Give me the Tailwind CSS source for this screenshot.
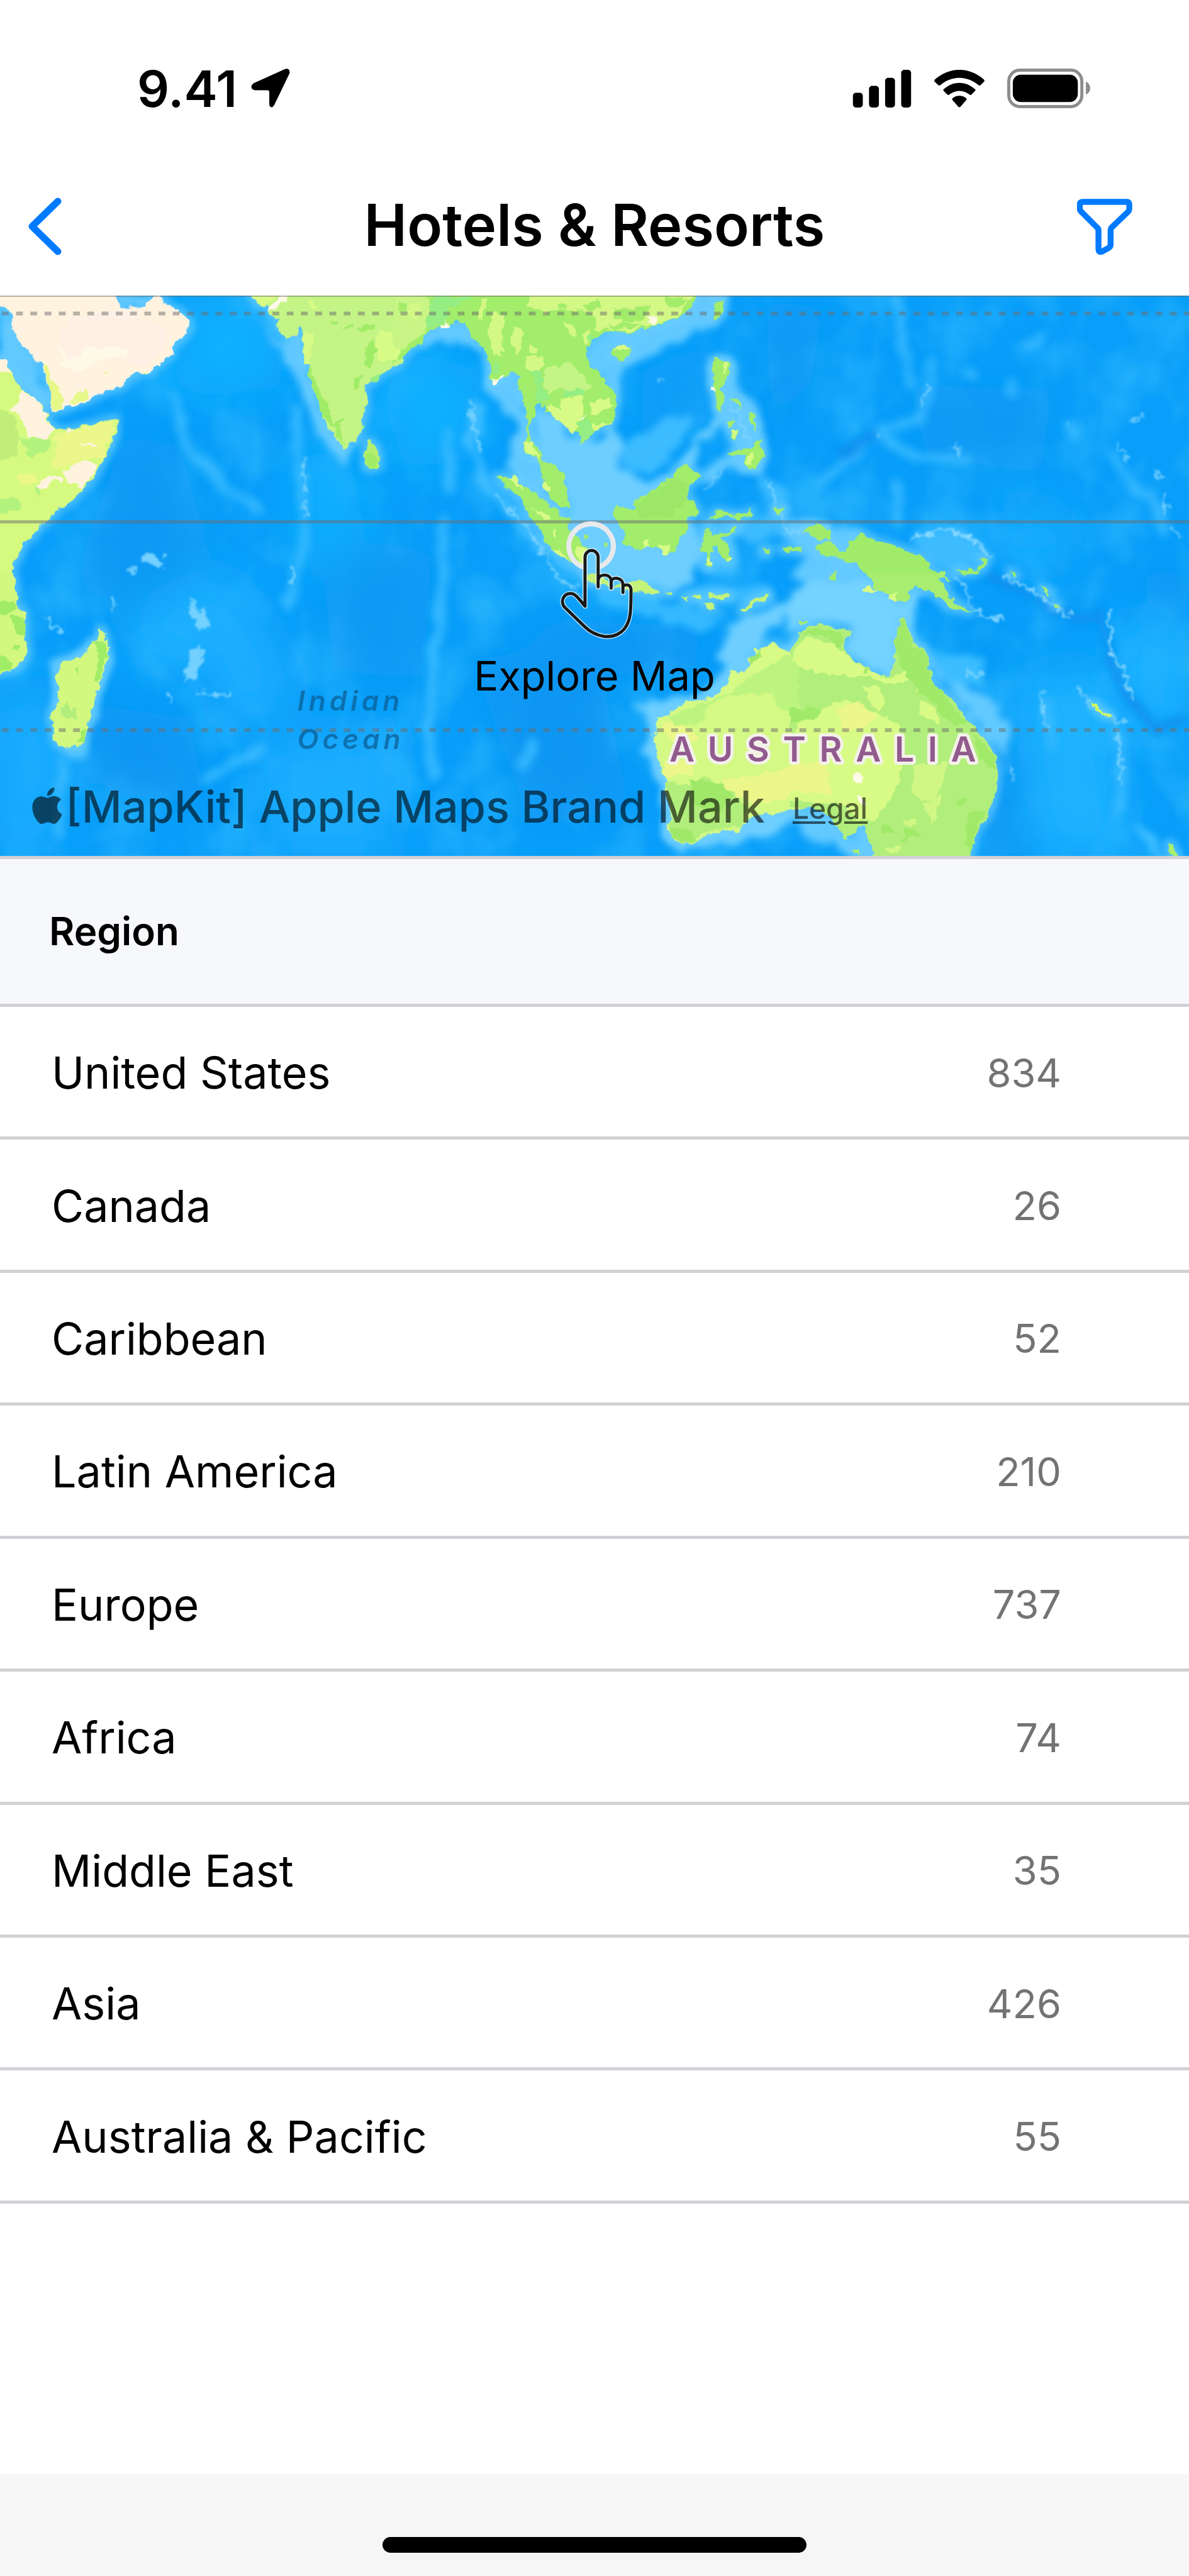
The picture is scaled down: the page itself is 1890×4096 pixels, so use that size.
<!DOCTYPE html>
<html lang="en">
<head>
  <meta charset="UTF-8" />
  <meta name="viewport" content="width=device-width, initial-scale=1" />
  <title>Hotels &amp; Resorts</title>
  <script src="https://cdn.jsdelivr.net/npm/@tailwindcss/browser@4"></script>
</head>
<body class="min-h-screen flex flex-col bg-white text-black font-[Inter,'Liberation_Sans',sans-serif]">

  <!-- Status bar -->
  <div class="flex items-center justify-between h-[250px] pt-[31px] pl-[218px] pr-[157px]">
    <div class="flex items-center gap-[22px]">
      <span class="text-[80px] leading-none font-semibold">9.41</span>
      <svg class="w-[63px] h-[63px]" viewBox="0 0 63 64" aria-hidden="true">
        <path d="M62 7 L37 59 Q34 64 31 62 Q29 61 29 57 L29 38 Q29 35 26 35 L6 35 Q0 34 0 29 Q1 25 5 23 L54 1 Q62 -2 62 7Z" />
      </svg>
    </div>
    <div class="flex items-center">
      <svg class="w-[94px] h-[60px] mr-[35px]" viewBox="0 0 94 61" aria-hidden="true">
        <rect x="0" y="37" width="16" height="24" rx="5" />
        <rect x="26" y="26" width="16" height="35" rx="5" />
        <rect x="52" y="13" width="16" height="48" rx="5" />
        <rect x="78" y="0" width="16" height="61" rx="5" />
      </svg>
      <svg class="w-[82px] h-[60px] mr-[35px]" viewBox="0 0 82 61" aria-hidden="true">
        <path d="M41 13 C53 13 64 18 72 25 Q73.500 26 75 25 L81 19 Q82 17.500 81 16 C70 6 56 0 41 0 C26 0 12 6 1 16 Q0 17.500 1 19 L7 25 Q8.500 26 10 25 C18 18 29 13 41 13Z" />
        <path d="M41 34 C47 34 53 36.500 58 40.500 Q59 41.500 60 40.500 L66.500 34 Q67.500 32.500 66.500 31.500 C59 25 51 21 41 21 C31 21 23 25 15.500 31.500 Q14.500 32.500 15.500 34 L22 40.500 Q23 41.500 24 40.500 C29 36.500 35 34 41 34Z" />
        <path d="M41 42 C45.500 42 49 43.500 52 46 Q53.500 47.500 52 49 L42.500 60 Q41 61 39.500 60 L30 49 Q28.500 47.500 30 46 C33 43.500 36.500 42 41 42Z" />
      </svg>
      <svg class="w-[132px] h-[63px]" viewBox="0 0 134 64" aria-hidden="true">
        <rect x="2.500" y="2.500" width="118" height="59" rx="18" fill="none" stroke="#8c8c8c" stroke-width="5" />
        <rect x="9" y="10" width="105" height="44" rx="13" />
        <path d="M127 21 Q134 24 134 32 Q134 39 127 42Z" fill="#8c8c8c" />
      </svg>
    </div>
  </div>

  <!-- Navigation bar -->
  <header class="grid grid-cols-[1fr_auto_1fr] items-center h-[220px] pl-11 pr-[90px]">
    <button type="button" aria-label="Back" class="justify-self-start">
      <svg class="w-[54px] h-[92px]" viewBox="0 0 54 92" fill="none" stroke="#007aff" stroke-width="11" stroke-linecap="round" stroke-linejoin="round">
        <path d="M48 6 L7 46 L48 86" />
      </svg>
    </button>
    <h1 class="pl-[46px] pb-1 text-[92px] leading-none font-semibold">Hotels &amp; Resorts</h1>
    <button type="button" aria-label="Filter" class="justify-self-end">
      <svg class="w-[88px] h-[89px]" viewBox="0 0 89 90" fill="none" stroke="#007aff" stroke-width="9.500" stroke-linejoin="round">
        <path d="M9 5 H80 Q84 5 84 9 V16 Q84 19 82 21 L56 46 Q54 48 54 51 V74 Q54 77 51 79 L40 85 Q34.500 87 34.500 81 V51 Q34.500 48 32 46 L7 21 Q4.500 19 4.500 16 V9 Q4.500 5 9 5Z" />
      </svg>
    </button>
  </header>

  <!-- Map -->
  <section class="relative">
    <svg class="block w-full h-auto" viewBox="0 477 1920 905" role="img" aria-label="Map of the Indian Ocean and Australia">
      <defs>
        <filter id="soft" filterUnits="userSpaceOnUse" x="-60" y="420" width="2040" height="1020"><feGaussianBlur stdDeviation="36" /></filter>
        <filter id="haze" filterUnits="userSpaceOnUse" x="-20" y="460" width="1960" height="940">
          <feTurbulence type="fractalNoise" baseFrequency="0.03" numOctaves="3" seed="4" result="n" />
          <feDisplacementMap in="SourceGraphic" in2="n" scale="30" xChannelSelector="R" yChannelSelector="G" />
          <feGaussianBlur stdDeviation="6" />
        </filter>
        <filter id="ridge" filterUnits="userSpaceOnUse" x="-20" y="460" width="1960" height="940">
          <feTurbulence type="fractalNoise" baseFrequency="0.03" numOctaves="3" seed="4" result="n" />
          <feDisplacementMap in="SourceGraphic" in2="n" scale="22" xChannelSelector="R" yChannelSelector="G" />
          <feGaussianBlur stdDeviation="7" />
        </filter>
        <filter id="spark" filterUnits="userSpaceOnUse" x="-20" y="460" width="1960" height="940">
          <feTurbulence type="fractalNoise" baseFrequency="0.08" numOctaves="3" seed="8" result="n" />
          <feDisplacementMap in="SourceGraphic" in2="n" scale="24" xChannelSelector="R" yChannelSelector="G" />
          <feGaussianBlur stdDeviation="1.500" />
        </filter>
        <filter id="coast" filterUnits="userSpaceOnUse" x="-20" y="460" width="1960" height="940">
          <feTurbulence type="fractalNoise" baseFrequency="0.07" numOctaves="3" seed="2" result="n" />
          <feDisplacementMap in="SourceGraphic" in2="n" scale="13" xChannelSelector="R" yChannelSelector="G" />
        </filter>
        <filter id="fringe" filterUnits="userSpaceOnUse" x="-20" y="460" width="1960" height="940">
          <feMorphology in="SourceAlpha" operator="dilate" radius="6" />
          <feGaussianBlur stdDeviation="6" result="b" />
          <feFlood flood-color="#6ccdff" />
          <feComposite in2="b" operator="in" />
        </filter>
        <filter id="relief" filterUnits="userSpaceOnUse" x="0" y="470" width="1920" height="920">
          <feTurbulence type="fractalNoise" baseFrequency="0.012 0.009" numOctaves="3" seed="11" />
          <feColorMatrix values="0 0 0 0 0.12  0 0 0 0 0.70  0 0 0 0 1  2.6 0 0 0 -1.1" />
        </filter>

        <g id="land">
          <!-- Africa, Arabia -->
          <g transform="translate(0 470) scale(.40816 .33333)">
            <path fill="#fff3df" d="M-20 -20V55L20 75 45 110 52 195 75 240 100 275 125 300 140 340 160 345 185 430 200 500 200 580 240 575 300 545 350 528 385 500 440 475 490 460 500 430 545 400 600 395 605 365 640 350 660 318 685 310 688 260 715 235 755 170 740 130 700 90 650 60 640 22 605 22 590 50 555 80 485 82 470 40 450 -20Z" />
            <path fill="#d6fa80" d="M-20 320L15 335 40 370 50 410 70 460 100 485 140 520 170 560 192 600 180 630 225 675 290 665 400 635 462 615 460 690 440 750 410 810 390 860 360 915 320 965 290 1010 240 1045 200 1095 165 1130 130 1180 95 1220 75 1280 55 1320 42 1400H-20Z" />
            <path fill="#c4f486" d="M990 0L1030 70 1065 75 1065 120 1110 135 1085 165 1135 230 1175 210 1185 165 1200 200 1203 350 1220 360 1235 460 1265 550 1290 640 1325 700 1360 770 1385 735 1410 725 1425 680 1440 600 1452 540 1445 460 1480 430 1520 390 1590 345V0Z" />
            <path fill="#b4f070" d="M1462 720L1490 760 1502 800 1500 850 1462 865 1442 845 1445 770Z" />
          </g>
          <!-- South-east Asia -->
          <g transform="translate(640 470) scale(.40816 .33333)" fill="#a2ed6a">
            <path d="M-10 -10V355L40 300 70 265 105 250 110 210 140 185 200 170 240 150 270 150 285 200 310 240 350 275 360 330 375 370 370 430 390 445 425 415 450 385 485 410 490 480 510 540 520 620 510 720 500 765 535 800 570 830 575 900 600 970 610 1010 650 1040 695 1050 670 970 668 900 635 855 580 825 570 780 550 740 525 720 525 650 545 600 555 550 590 555 590 580 630 585 665 620 670 650 700 680 730 690 725 745 780 700 785 675 840 655 868 605 868 530 850 460 800 400 770 350 750 300 760 255 790 220 850 185 890 205 960 190 1020 165 1110 130 1165 80 1205 -10Z" />
            <path d="M850 295L880 265 930 270 915 320 880 338 855 315ZM1300 35L1290 100 1260 150 1248 110 1270 50ZM1255 325L1310 340 1320 400 1300 440 1280 470 1300 520 1285 595 1265 570 1265 490 1250 450ZM1310 640L1335 630 1325 665 1308 670ZM1335 670L1355 665 1340 725 1325 715ZM1390 590L1420 590 1425 680 1405 640ZM1320 520L1350 530 1365 570 1345 555ZM1315 795L1350 765 1400 760 1440 715 1457 800 1430 830 1422 870 1385 850 1380 800Z" />
            <path d="M395 895L470 900 500 940 560 990 600 1030 650 1075 680 1110 685 1160 715 1185 740 1220 755 1250 745 1330 700 1320 650 1275 590 1210 565 1140 525 1085 515 1040 470 980 430 945Z" />
            <path d="M865 1040L940 1050 945 1005 1000 985 1060 915 1095 905 1110 850 1155 840 1170 870 1210 895 1160 935 1150 990 1175 1030 1200 1075 1160 1085 1150 1150 1120 1190 1105 1270 1060 1275 1030 1240 990 1235 965 1255 905 1225 895 1160 865 1110Z" />
            <path d="M1235 1110L1275 1060 1325 1075 1385 1080 1410 1055 1400 1085 1360 1105 1325 1090ZM1225 1150L1250 1165 1255 1190 1340 1145 1355 1150 1285 1195 1310 1240 1325 1290 1305 1315 1280 1280 1270 1220 1250 1250 1245 1340 1225 1330 1230 1270 1200 1250ZM1490 1045L1535 1050 1515 1090 1495 1075ZM1520 1240H1600V1262L1530 1258ZM1445 1250H1478L1470 1275H1450ZM740 1185H762V1202H740ZM815 1222H832V1242H815Z" />
          </g>
          <!-- Java, Timor and western Australia -->
          <g transform="translate(640 830) scale(.40816 .36364)">
            <path fill="#c4f37a" d="M750 265L795 265 850 320 900 310 960 290 1000 310 1040 340 1040 358 960 348 860 325 790 310 750 295ZM1055 342L1092 350 1080 364ZM1130 362H1162L1150 380ZM1170 358H1200V374H1170ZM1235 352L1280 350 1325 360 1320 374 1240 374ZM1360 430L1400 385 1475 350 1475 368 1400 412 1375 436ZM1205 396L1245 398 1260 428 1235 422Z" />
            <path fill="#d4f985" d="M1590 600L1540 610 1500 580 1475 575 1450 595 1420 600 1425 625 1395 640 1395 675 1360 710 1335 690 1315 700 1315 740 1280 790 1220 820 1165 835 1110 855 1070 895 1040 905 1030 905 1032 960 1015 985 1030 1060 1050 1130 1065 1190 1070 1250 1075 1310 1090 1350 1070 1400 1100 1450 1140 1468 1180 1460 1230 1420 1300 1405 1350 1408 1390 1360 1440 1335 1500 1330 1590 1310Z" />
          </g>
          <!-- New Guinea -->
          <g transform="translate(1280 470) scale(.40816 .33333)" fill="#a0ec69">
            <path d="M-10 1240L30 1250V1268L-10 1255ZM35 1165L100 1130 150 1150 148 1205 100 1205 80 1185ZM90 1235L150 1215 180 1255 210 1255 230 1215 280 1175 320 1205 400 1235 440 1250 505 1275 545 1320 545 1345 625 1395H300L275 1335 240 1315 180 1295 115 1270ZM150 1380L170 1345 170 1400H150ZM640 1355L735 1345 755 1310 740 1290 770 1295 760 1335 720 1365 680 1375ZM855 1350L890 1385H870Z" />
          </g>
          <!-- Eastern Australia and Pacific islands -->
          <g transform="translate(1280 930) scale(.40816 .33333)" fill="#a8ed70">
            <path d="M300 -15L320 50 340 75 390 90 400 118 445 125 465 100 455 75 490 55 540 65 590 120 620 155 665 165 708 180 680 150 640 125 610 70 585 20 610 15 600 -15Z" />
            <path fill="#b2ee7c" d="M-10 370L10 310 40 265 105 230 150 240 180 260 235 260 225 290 205 310 200 360 240 410 290 440 330 480 380 488 400 440 405 350 412 270 425 200 440 200 450 240 465 270 480 330 520 350 540 420 550 500 580 550 640 595 670 670 710 710 720 745 765 795 795 850 810 970 795 1090 770 1160 735 1220 715 1300 685 1390H335L300 1300 285 1210 240 1240 205 1275 180 1210 150 1170 100 1130 50 1118 -10 1120Z" />
            <path d="M20 214H55V228H20ZM980 52L1025 82 1020 92 990 72ZM1025 132L1058 145 1030 152ZM240 1330H270V1350H240ZM1480 1295L1500 1300 1530 1375H1500Z" />
            <path fill="#d0f860" d="M1180 605L1265 690 1245 684 1195 638Z" />
          </g>
          <!-- East African coast and Madagascar -->
          <g transform="translate(0 930) scale(.40816 .33333)" fill="#d2f880">
            <path d="M-20 -15H52L65 60 65 150 98 180 98 300 110 360 100 400 60 450 -20 478Z" />
            <path d="M395 250L415 285 425 330 432 390 415 430 400 500 385 560 365 640 345 720 335 780 315 825 265 838 225 815 210 770 208 710 195 685 215 640 232 610 235 540 222 500 235 420 290 405 345 370 358 320 388 310Z" />
          </g>
        </g>
      </defs>

      <!-- Sea floor -->
      <rect y="470" width="1920" height="920" fill="#089efa" />
      <rect y="470" width="1920" height="920" filter="url(#relief)" opacity=".3" />
      <g filter="url(#soft)">
        <path fill="#10b0ff" d="M260 480H420L470 620 350 640 240 620 310 560ZM480 740L560 720 590 860 500 940ZM640 560L780 600 760 740 660 760 620 660Z" />
        <path fill="#0d99f4" d="M200 700L290 720 340 900 240 1000 120 940ZM520 920L620 870 700 900 680 1100 540 1080ZM1240 480L1330 500 1310 620 1240 720ZM1460 620L1700 630 1680 760 1500 740Z" />
        <path fill="#0b96f3" d="M760 1060L960 1060 1020 1300 860 1340ZM800 1000L1140 1010 1120 1080 980 1090ZM100 1130L300 1160 340 1300 180 1280ZM1600 1180L1650 1200 1640 1380 1580 1380ZM1540 1010L1620 1040 1600 1090 1530 1050ZM1850 900L1920 930V990L1850 980Z" />
        <path fill="#1fb3ff" d="M1620 830L1700 820 1730 900 1640 920ZM1640 1100L1780 1080 1820 1380H1680ZM1800 1000L1920 1020V1200L1820 1160ZM200 1000L360 920 400 1000 260 1080Z" />
        <path fill="#1aaeff" d="M0 1130L80 1110 110 1240 60 1380H0ZM300 1000L400 960 480 1120 380 1180ZM430 1200L640 1180 620 1382H440Z" />
        <path fill="#0f9ff8" d="M1040 600L1160 540 1140 680 1030 740Z" />
      </g>

      <!-- Continental shelves -->
      <g filter="url(#haze)" fill="#62c9ff">
        <path transform="translate(0 470) scale(.40816 .33333)" d="M0 50L60 180 200 500 190 600 60 440 0 320ZM460 20H620L560 90 480 90ZM975 20L1100 240 1200 180 1215 400 1300 640 1385 770 1350 830 1280 720 1150 380 1060 200Z" />
        <g transform="translate(640 470) scale(.40816 .33333)">
          <path fill="#3cbcff" d="M300 520L340 560 320 760 360 900 520 1090 600 1240 740 1350 700 1380 540 1230 440 1070 330 940 280 740ZM1190 1120L1330 1100 1560 1080V1200L1340 1200 1350 1360 1240 1390 1190 1300ZM1420 880L1560 960 1560 1100 1480 1060ZM880 740L960 700 1100 600 1160 640 1100 780 1000 900 900 840Z" />
          <path fill="#6ecfff" d="M540 560L640 580 700 720 800 720 870 640 890 850 960 900 1010 930 1090 900 1130 800 1230 640 1300 560 1310 640 1200 720 1170 830 1180 900 1100 1000 1180 1160 1220 1250 1170 1400H740L680 1200 690 1050 640 900 560 820Z" />
          <path d="M740 300L850 180 1000 160 1190 10H1340L1260 160 950 340 880 420 880 560 800 400ZM240 140L290 200 350 280 480 400 520 600 560 800 600 1000 690 1110 640 1110 480 980 450 850 480 650 400 520 340 500 360 300 250 250 100 270 110 200Z" />
          <path d="M1240 300L1330 320 1350 480 1400 520 1450 680 1470 860 1420 900 1290 860 1340 760 1250 560ZM1210 880L1330 790 1350 810 1220 920Z" />
        </g>
        <g transform="translate(640 830) scale(.40816 .36364)">
          <path fill="#6ecfff" d="M740 60H1130L1170 160 1170 270 1090 340 960 300 860 300 760 260ZM1590 380L1400 430 1300 520 1270 750 1050 830 930 840 990 890 1010 1000 950 1050 1050 1200 1050 1430 1140 1490 1380 1450 1590 1370V560L1400 620Z" />
          <path fill="#35b9ff" d="M780 330L1060 380 1240 440 1300 450 1220 520 960 440 800 400ZM1130 330L1480 320 1500 390 1140 400Z" />
        </g>
        <g transform="translate(1280 930) scale(.40816 .33333)">
          <path fill="#74d3ff" d="M-20 90L60 10 300 -10 440 130 460 60 540 65 490 110 480 330 520 350 380 510 200 380 235 250 100 220 -20 290Z" />
          <path d="M520 350L570 500 660 590 730 740 830 850 830 960 870 740 780 590 640 510ZM-20 1120L170 1150 200 1270 300 1220 340 1370 230 1370 -20 1190Z" />
          <path fill="#3bbdff" d="M560 350L770 400 760 540 600 510ZM1330 1200L1430 1240 1500 1380 1430 1370Z" />
        </g>
        <g transform="translate(1280 470) scale(.40816 .33333)">
          <path d="M-20 1110L90 1110 170 1140 280 1160 210 1260 280 1320 300 1400H-20L60 1290 -20 1180Z" />
          <path fill="#3dbcff" d="M460 1170L640 1150 760 1220 800 1320 640 1370 560 1320Z" />
        </g>
        <path fill="#50c2ff" d="M80 1070L150 1040 165 1010 180 1060 135 1220 110 1230 85 1160Z" />
      </g>

      <!-- Ridges and reefs -->
      <g filter="url(#ridge)" fill="none" stroke="#38baff" stroke-linecap="round" stroke-width="14">
        <path stroke-width="16" d="M716 840L712 960 700 1060 692 1180 700 1250M726 790L722 700" />
        <path d="M476 660L484 760 492 880 478 940 460 980M1505 590L1500 640 1480 680 1420 690 1350 760 1318 780M1420 700L1480 740 1560 740M1450 480L1458 560 1470 620M1450 780L1448 840" />
        <path d="M1805 1180L1812 1280 1800 1320M1690 1130L1700 1200M280 640L300 720 380 800 420 820M100 1230L95 1350M330 1260L420 1210M860 1200L840 1240" />
        <path stroke="#0b90ef" d="M1600 930L1740 1000 1780 990 1795 1080 1840 1150 1870 1180 1915 1160M1410 700L1360 735" />
        <path d="M1562 600L1572 610M1680 540L1660 560M1720 690L1740 700M1795 730L1830 790 1870 820M1860 800L1880 860M1630 620L1634 640" />
      </g>
      <g filter="url(#spark)" fill="none" stroke="#a4e2ff" stroke-linecap="round" stroke-width="4">
        <path stroke="#73d0ff" stroke-width="17" d="M314 986L330 1010M318 1050L314 1080 304 1092M238 900L256 906" />
        <path stroke="#73d0ff" d="M490 745L494 795M492 810L494 830M476 920L470 940M308 962L316 985M276 1120L274 1132M180 980L186 970M77 1000L84 1012 102 1022M212 925L220 915M322 1116L345 1124 372 1120" />
        <path d="M760 650L768 700 778 730M800 800L850 850 900 930 940 960M1140 790L1170 760M1180 650L1200 690 1220 740M1240 780L1260 820 1270 860 1340 850" opacity=".6" />
        <path d="M1470 870L1530 852 1570 870 1600 900M1540 930L1560 950 1570 985 1620 1003M1620 930L1660 950 1730 995M1790 985L1795 1050 1815 1085M1815 1090L1830 1130" opacity=".8" />
        <path d="M1742 1110L1760 1140 1800 1160 1820 1165M1680 1115L1684 1140 1693 1180M1560 1080L1566 1092 1588 1086M1632 1240L1638 1260M1806 1180L1810 1270" opacity=".6" />
        <path d="M1500 620L1488 656M1535 720L1548 720 1548 740M1725 680L1722 685M1826 675L1846 676M1802 715L1825 742M1867 757L1874 770M1880 800L1882 830M1895 850L1906 865M1416 700H1418M1060 616L1070 610" opacity=".6" />
      </g>

      <!-- Land with its shallow fringe -->
      <use href="#land" filter="url(#fringe)" opacity=".7" />
      <use href="#land" filter="url(#coast)" />
      <g filter="url(#coast)">
        <g transform="translate(0 470) scale(.40816 .33333)">
          <path fill="#fff0e6" d="M280 130L500 90 560 140 640 160 660 220 620 330 540 370 500 300 330 270 320 325 270 325 230 210Z" />
          <path fill="#fffae8" d="M330 275L500 280 500 310 400 325 325 390 245 370 245 270 265 325H320Z" />
          <path fill="#e6f888" d="M165 345L190 365 205 430 240 460 255 540 240 570 205 575 190 440ZM280 540L300 500 345 470 350 520ZM560 385H580V397H560ZM410 405L430 385 425 410Z" />
          <path fill="#c0ee78" d="M-10 560L60 600 75 700 70 800 -10 820Z" />
          <path fill="#b4f27e" d="M80 720L200 710 190 780 120 800ZM-10 1010L50 1000 90 1020 80 1060 -10 1080ZM140 940H175L155 1000Z" />
          <path fill="#ecf78a" d="M230 690L450 625 450 690 405 800 330 825 250 860 200 850 230 740 205 720ZM60 890L130 880 150 920 90 945Z" />
          <path fill="#fff3df" d="M80 475L140 520 185 590 175 630 215 670 185 715 115 710 75 600 35 565 75 535ZM-10 320L30 345 40 395 -10 400ZM330 825L385 835 370 885 325 950 275 930 250 870ZM140 940L200 890 250 905 245 918 200 915 175 960ZM320 735L390 750 385 756 325 752ZM250 675L300 668 270 688Z" />
          <path fill="#a0ec66" d="M1215 360L1235 385 1265 480 1300 560 1320 640 1360 610 1345 650 1360 740 1340 720 1320 660 1280 600 1240 480ZM1450 270L1470 230 1490 280 1470 380 1440 360ZM1310 140H1335V160H1310ZM1340 190L1400 150 1395 175ZM1440 160L1490 150 1480 190 1420 195ZM1400 420L1430 400 1420 460 1400 480ZM1450 800L1475 780 1490 810 1480 855 1450 850Z" />
          <path fill="#d8fb86" d="M995 20H1100L1060 70 1030 65ZM1205 200L1240 210 1225 350H1206ZM1500 180L1580 220V330L1500 340 1490 250ZM1220 40L1260 70 1235 85Z" />
          <path fill="#94ee84" d="M1465 415L1510 400 1500 425 1465 440ZM1420 670L1440 645 1438 670Z" />
          <path fill="#fffae8" d="M1110 25H1140L1085 90 1062 95Z" />
        </g>
        <g transform="translate(640 470) scale(.40816 .33333)">
          <path fill="#c8f585" d="M-10 -10L120 20 150 110 110 200 60 255 -10 290Z" />
          <path fill="#d4f885" d="M520 -10H1190L1110 125 1020 160 890 200 850 180 780 190 790 140 750 90 640 90 585 110 560 80 520 75ZM380 100L425 110 420 310 385 310 365 200ZM460 170L505 200 480 320 450 250ZM505 320L580 310 590 360 550 395 505 370ZM660 140L700 170 710 220 680 200ZM730 200L770 180 750 270ZM340 30L360 30 345 140 325 130ZM525 250L560 280 555 300H530ZM40 60L100 50 100 130 60 140Z" />
          <path fill="#a2ec6a" d="M740 70L800 40 810 80 770 95ZM860 90L960 80 1010 60 980 140 900 150 860 120ZM1060 30L1160 40 1120 80 1070 60ZM870 190L840 170 900 150 980 160ZM10 60H40V100H10ZM640 60H670V85H640Z" />
          <path fill="#c4f486" d="M595 370L690 340 750 430 775 460 740 490 740 540 650 470 600 490 580 430Z" />
          <path fill="#94ee84" d="M150 10L300 30 250 70 200 80 210 120 170 170 120 180 115 140ZM530 390L580 385 580 450 610 520 555 550 550 450ZM660 480L740 475 740 505 660 515ZM755 220L785 215 760 260ZM385 345L410 350 405 400 385 400Z" />
          <path fill="#d8fb86" d="M650 520L735 510 740 590 700 685 650 640 600 570 600 550 650 580ZM765 540L840 510 862 560 800 590 765 600ZM770 640L855 640 780 675ZM510 720L545 735 545 770 570 820 540 800 505 765ZM585 920L600 935 600 965 585 955ZM445 895L480 905 505 960 480 940ZM535 1050L575 1065 615 1105 590 1110ZM618 1145H630V1200H618ZM610 1240L665 1270 680 1310ZM710 1235L740 1235 755 1260 740 1320 712 1290ZM980 1205H998V1240H980ZM1035 1225L1080 1215 1075 1275 1055 1275ZM855 295L880 265 925 270 915 285 870 290ZM1295 340H1310L1300 400H1290ZM1395 785L1415 785 1405 840 1385 835ZM1335 670L1350 668 1340 715 1328 712ZM1305 1285L1325 1290 1308 1310ZM1232 1290H1247V1320H1230Z" />
          <path fill="#9de767" d="M945 1030L1100 910 1150 920 1145 1020 1080 1090 960 1100Z" />
          <path fill="#94ee84" d="M710 630L760 620 780 690 730 735 735 690Z" />
          <path fill="#fffae8" d="M172 165L190 155 195 135 212 170 175 188ZM990 115L1030 125 1030 150 1010 165ZM378 430L400 430 425 395 425 415 390 448ZM1243 465H1263V485H1243ZM720 620L755 602 740 622Z" />
        </g>
        <g transform="translate(640 830) scale(.40816 .36364)">
          <path fill="#bdf480" d="M1590 610L1500 640 1410 720 1320 790 1230 830 1080 900 1100 940 1220 930 1230 850 1320 800 1480 800 1520 870 1590 880Z" />
          <path fill="#b2ee7c" d="M1065 1190L1160 1200 1230 1170 1330 1220 1380 1300 1370 1390 1230 1410 1150 1465 1080 1430 1090 1350Z" />
          <path fill="#a0e867" d="M1160 1180L1280 1190 1330 1260 1260 1330 1180 1290ZM1080 1390L1160 1400 1190 1450 1140 1465 1090 1435ZM1400 630L1450 600 1430 660 1400 670Z" />
          <path fill="#ecf78a" d="M1045 920L1160 950 1200 1000 1100 1010 1060 960ZM1060 1100L1160 1090 1180 1150 1060 1170ZM1290 1180L1480 1150 1590 1100V1250L1420 1290 1300 1220Z" />
          <path fill="#d8fb86" d="M1395 680L1470 590 1560 610 1500 660 1430 700ZM1320 700H1340V780H1315Z" />
        </g>
        <g transform="translate(1280 930) scale(.40816 .33333)">
          <path fill="#d8fb86" d="M50 300L180 330 190 370 290 450 370 500 460 460 470 500 400 530 300 490 180 480 60 460 -10 400ZM280 530L350 540 365 620 340 660 300 600ZM500 600L570 640 580 720 500 670ZM-10 760L60 680 200 600 330 660 420 720 440 870 420 1000 330 1190 250 1180 180 1100 60 1100 -10 1090ZM500 520H530V560H490Z" />
          <path fill="#ecf78a" d="M180 640L260 610 340 690 300 720 200 760ZM-10 900L140 910 150 1060 -10 1040Z" />
          <path fill="#d0f785" d="M480 920L610 900 600 990 560 1080 500 1090 470 1030ZM520 1100L590 1060 580 1120 550 1200ZM370 1320L430 1310 420 1345 380 1345ZM440 1180H485V1210H440Z" />
          <path fill="#a0ea68" d="M-10 640H110L90 700 -10 710ZM345 1215L390 1210 400 1240 360 1250ZM440 1230L480 1220 500 1250 430 1285ZM650 1080L690 1075 685 1100 650 1105ZM40 280L90 250 200 280 190 360 140 290ZM412 270L425 210 440 210 460 270 475 340 515 355 535 420 545 500 600 570 660 680 700 700 640 730 560 620 500 560 430 440 405 370ZM720 770L790 860 800 940 740 880ZM760 1140L730 1210 700 1350 680 1260 700 1140ZM275 450H295V475H275Z" />
          <path fill="#fffae8" d="M245 950L270 950 280 1000 245 995ZM250 1062L275 1070 290 1120 270 1115Z" />
          <path fill="#d8fb86" d="M278 78L300 40 340 75ZM387 90H410V118H387Z" />
        </g>
        <g transform="translate(0 930) scale(.40816 .33333)" fill="#a0ec66">
          <path d="M-10 125L55 125 65 160 55 180 -10 185ZM42 195L80 195 98 220 98 290 60 270ZM50 335H78V358H50ZM-10 370L50 420 40 455 -10 465ZM358 320L415 318 430 390 410 400 400 490 385 520 368 515 385 430 390 350ZM295 450L315 445 300 480ZM320 755L335 755 325 810 305 800Z" />
          <path fill="#b2ee7c" d="M240 640L270 600 275 650 305 640 300 695 245 685Z" />
        </g>
      </g>

      <!-- Equator and tropics -->
      <g fill="none" stroke="#6b6b6b" stroke-opacity=".5">
        <path d="M0 478H1920" stroke-width="2" />
        <path d="M0 842.500H1920" stroke-width="5" />
        <path d="M3 506H1920M3 1179H1920" stroke-width="6" stroke-dasharray="11 12" />
      </g>

      <!-- Labels -->
      <g class="font-[Inter,sans-serif] italic font-semibold" fill="#0b5f96" fill-opacity=".75" font-size="45" letter-spacing="6">
        <text x="480" y="1147">Indian</text>
        <text x="480" y="1209">Ocean</text>
      </g>
      <text class="font-[Inter,sans-serif] font-semibold" x="1081" y="1230" font-size="56" letter-spacing="22" fill="#925b8f" stroke="#f4f1ea" stroke-width="10" stroke-linejoin="round" paint-order="stroke">AUSTRALIA</text>
    </svg>

    <button type="button" class="absolute inset-x-0 top-[357px] mx-auto w-fit flex flex-col items-center gap-[22px] text-[65px] leading-none">
      <svg class="w-[122px] h-[193px]" viewBox="897 840 124 196" fill="none" stroke-linecap="round" stroke-linejoin="round" aria-hidden="true">
        <path d="M939 915 A36 36 0 1 1 968 915" stroke="#e8e9ec" stroke-width="8" />
        <path stroke="#fff" stroke-opacity=".7" stroke-width="8" d="M943.700 979V900a10.600 11 0 0 1 21.200 0V948M965 936c2-10 20-10 21 2V950M986 939c2-8 18-7 19 5V957M1005 947c6-5 13-2 13 6C1018 985 1017 995 1014 1003C1006 1027 985 1029 975 1028C962 1026 950 1019 943 1012L910 980C903 970 910 956 924 959C929 961 932 965 943.700 979" />
        <path stroke="#191919" stroke-width="5" d="M943.700 979V900a10.600 11 0 0 1 21.200 0V948M965 936c2-10 20-10 21 2V950M986 939c2-8 18-7 19 5V957M1005 947c6-5 13-2 13 6C1018 985 1017 995 1014 1003C1006 1027 985 1029 975 1028C962 1026 950 1019 943 1012L910 980C903 970 910 956 924 959C929 961 932 965 943.700 979" />
      </svg>
      Explore Map
    </button>

    <div class="absolute left-[50px] bottom-[43px] flex items-center text-black/60">
      <svg class="w-[58px] h-[58px] -ml-1 mb-1" viewBox="0 0 24 24" fill="currentColor" aria-hidden="true">
        <path d="M12.152 6.896c-.948 0-2.415-1.078-3.960-1.040-2.040.027-3.910 1.183-4.961 3.014-2.117 3.675-.546 9.103 1.519 12.090 1.013 1.454 2.208 3.090 3.792 3.039 1.520-.065 2.090-.987 3.935-.987 1.831 0 2.350.987 3.960.948 1.637-.026 2.676-1.480 3.676-2.948 1.156-1.688 1.636-3.325 1.662-3.415-.039-.013-3.182-1.221-3.220-4.857-.026-3.040 2.480-4.494 2.597-4.559-1.429-2.090-3.623-2.324-4.390-2.376-2-.156-3.675 1.090-4.610 1.090zM15.530 3.830c.843-1.012 1.400-2.427 1.245-3.830-1.207.052-2.662.805-3.532 1.818-.780.896-1.454 2.338-1.273 3.714 1.338.104 2.715-.688 3.559-1.701" />
      </svg>
      <span class="text-[70px] leading-none font-medium">[MapKit] Apple Maps Brand Mark</span>
      <a href="#" class="ml-[44px] mt-1 text-[46px] leading-none font-medium underline decoration-4 underline-offset-4">Legal</a>
    </div>
  </section>

  <!-- Regions -->
  <h2 class="flex items-center h-[240px] px-[78px] bg-[#f7f8fc] border-y-5 border-[#d1d0d5] text-[62px] leading-none font-semibold">Region</h2>
  <ul class="grid auto-rows-fr min-h-[1903px] text-[70px] leading-none">
    <li class="border-b-5 border-[#d1d0d5]"><a href="#" class="flex items-center justify-between h-full pt-1 pl-[82px] pr-[203px]">United States <span class="text-[63px] text-[#737375]">834</span></a></li>
    <li class="border-b-5 border-[#d1d0d5]"><a href="#" class="flex items-center justify-between h-full pt-1 pl-[82px] pr-[203px]">Canada <span class="text-[63px] text-[#737375]">26</span></a></li>
    <li class="border-b-5 border-[#d1d0d5]"><a href="#" class="flex items-center justify-between h-full pt-1 pl-[82px] pr-[203px]">Caribbean <span class="text-[63px] text-[#737375]">52</span></a></li>
    <li class="border-b-5 border-[#d1d0d5]"><a href="#" class="flex items-center justify-between h-full pt-1 pl-[82px] pr-[203px]">Latin America <span class="text-[63px] text-[#737375]">210</span></a></li>
    <li class="border-b-5 border-[#d1d0d5]"><a href="#" class="flex items-center justify-between h-full pt-1 pl-[82px] pr-[203px]">Europe <span class="text-[63px] text-[#737375]">737</span></a></li>
    <li class="border-b-5 border-[#d1d0d5]"><a href="#" class="flex items-center justify-between h-full pt-1 pl-[82px] pr-[203px]">Africa <span class="text-[63px] text-[#737375]">74</span></a></li>
    <li class="border-b-5 border-[#d1d0d5]"><a href="#" class="flex items-center justify-between h-full pt-1 pl-[82px] pr-[203px]">Middle East <span class="text-[63px] text-[#737375]">35</span></a></li>
    <li class="border-b-5 border-[#d1d0d5]"><a href="#" class="flex items-center justify-between h-full pt-1 pl-[82px] pr-[203px]">Asia <span class="text-[63px] text-[#737375]">426</span></a></li>
    <li class="border-b-5 border-[#d1d0d5]"><a href="#" class="flex items-center justify-between h-full pt-1 pl-[82px] pr-[203px]">Australia &amp; Pacific <span class="text-[63px] text-[#737375]">55</span></a></li>
  </ul>

  <!-- Home indicator -->
  <footer class="mt-auto flex items-end justify-center h-[162px] pb-[37px] bg-[#f6f6f6]">
    <div class="w-[674px] h-[25px] rounded-full bg-black"></div>
  </footer>
</body>
</html>
